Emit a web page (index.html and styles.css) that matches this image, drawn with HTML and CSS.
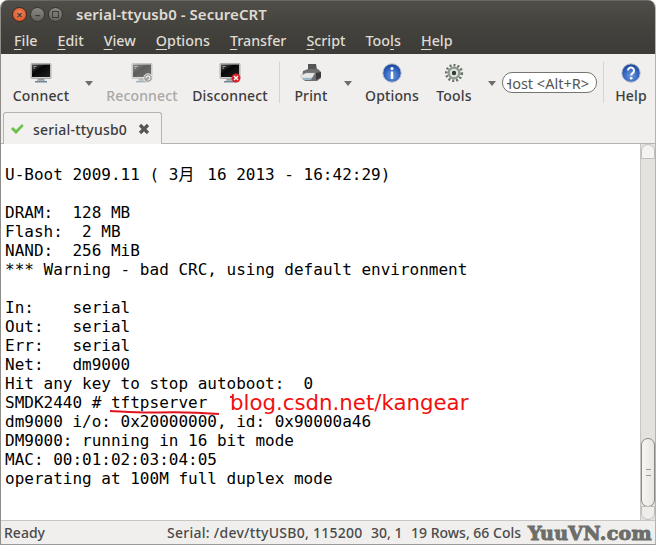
FILE: index.html
```html
<!DOCTYPE html>
<html lang="en">
<head>
<meta charset="utf-8">
<title>serial-ttyusb0 - SecureCRT</title>
<link rel="stylesheet" href="styles.css">
</head>
<body>
<svg class="defs" width="0" height="0">
  <defs>
    <linearGradient id="scr" x1="0" y1="0" x2="1" y2="1"><stop offset="0" stop-color="#555"/><stop offset=".4" stop-color="#050505"/><stop offset="1" stop-color="#222"/></linearGradient>
    <radialGradient id="blue" cx=".5" cy=".65" r=".65"><stop offset="0" stop-color="#6f9be0"/><stop offset=".7" stop-color="#2a5cb8"/><stop offset="1" stop-color="#1b3f8a"/></radialGradient>
    <g id="monitor">
      <rect x="1" y="0.5" width="20" height="15" rx="1" fill="#cfcfcf" stroke="#8a8a8a" stroke-width=".6"/>
      <rect x="2" y="1.5" width="18" height="12.5" fill="url(#scr)"/>
      <path d="M3.5 3.5h3M3.5 5.2h1.5" stroke="#ccc" stroke-width=".7"/>
      <path d="M8 15.5h6l1 2.2H7z" fill="#9a9a9a"/>
      <path d="M5 18h12v1.4H5z" fill="#6f8a96"/>
    </g>
  </defs>
</svg>
<div class="window">
  <header class="titlebar">
    <div class="controls">
      <span class="ctl ctl-close">×</span>
      <span class="ctl ctl-min">–</span>
      <span class="ctl ctl-max"><i></i></span>
    </div>
    <span class="title">serial-ttyusb0 - SecureCRT</span>
  </header>
  <nav class="menubar">
    <span class="menu"><u>F</u>ile</span>
    <span class="menu"><u>E</u>dit</span>
    <span class="menu"><u>V</u>iew</span>
    <span class="menu"><u>O</u>ptions</span>
    <span class="menu"><u>T</u>ransfer</span>
    <span class="menu"><u>S</u>cript</span>
    <span class="menu">Too<u>l</u>s</span>
    <span class="menu"><u>H</u>elp</span>
  </nav>
  <div class="toolbar">
    <div class="tool w-connect">
      <svg class="ico" viewBox="0 0 22 20" width="22" height="20"><use href="#monitor"/></svg>
      <span>Connect</span>
    </div>
    <div class="arrow a-connect"></div>
    <div class="tool w-reconnect off">
      <svg class="ico" viewBox="0 0 22 20" width="22" height="20"><g opacity=".62"><use href="#monitor"/></g><circle cx="17" cy="15" r="4.3" fill="#a5a5a5" stroke="#eee" stroke-width=".8"/><path d="M15 15a2 2 0 1 1 2 2" fill="none" stroke="#fff" stroke-width="1"/></svg>
      <span>Reconnect</span>
    </div>
    <div class="tool w-disconnect">
      <svg class="ico" viewBox="0 0 22 20" width="22" height="20"><use href="#monitor"/><circle cx="17" cy="15" r="4.5" fill="#d91f26"/><path d="M15 13l4 4M19 13l-4 4" stroke="#fff" stroke-width="1.4"/></svg>
      <span>Disconnect</span>
    </div>
    <div class="sep s-one"></div>
    <div class="tool w-print">
      <svg class="ico" viewBox="0 0 22 20" width="22" height="20"><path d="M8 1h8l1 6H8z" fill="#555"/><path d="M3 8l5-2h10l3 3v6l-4 3H5l-3-3z" fill="#6e6e6e"/><path d="M0 13l6-3h9l-3 5H2z" fill="#e8e8e8" stroke="#aaa" stroke-width=".4"/><path d="M2 15h10l-1 2H3z" fill="#9ab7c9"/><path d="M16 10l5-1v5l-5 3z" fill="#3a3a3a"/></svg>
      <span>Print</span>
    </div>
    <div class="arrow a-print"></div>
    <div class="tool w-options">
      <svg class="ico" viewBox="0 0 22 20" width="22" height="20"><circle cx="11" cy="10" r="9.2" fill="url(#blue)" stroke="#b9c0cc" stroke-width="1"/><circle cx="11" cy="5.6" r="1.5" fill="#fff"/><path d="M9.8 8.500h2.400v7.500H9.800z" fill="#fff"/></svg>
      <span>Options</span>
    </div>
    <div class="tool w-tools">
      <svg class="ico" viewBox="0 0 22 20" width="22" height="20"><circle cx="11" cy="10" r="6.500" fill="#8c9a90"/><circle cx="11" cy="10" r="7.800" fill="none" stroke="#66726a" stroke-width="2.600" stroke-dasharray="2 2"/><circle cx="11" cy="10" r="4.200" fill="#e4e4da"/><circle cx="11" cy="10" r="2.200" fill="#2f3a3a"/></svg>
      <span>Tools</span>
    </div>
    <div class="arrow a-tools"></div>
    <div class="search"><div class="search-clip"><span>Host &lt;Alt+R&gt;</span></div></div>
    <div class="sep s-two"></div>
    <div class="tool w-help">
      <svg class="ico" viewBox="0 0 22 20" width="22" height="20"><circle cx="11" cy="10" r="9.2" fill="url(#blue)" stroke="#b9c0cc" stroke-width="1"/><path d="M8 7.500a3 3 0 1 1 4.600 2.600c-1 .7-1.400 1.100-1.400 2.400" fill="none" stroke="#fff" stroke-width="2"/><circle cx="11.200" cy="15.300" r="1.300" fill="#fff"/></svg>
      <span>Help</span>
    </div>
  </div>
  <div class="tabstrip">
    <div class="tab">
      <svg class="check" viewBox="0 0 14 12" width="14" height="12"><path d="M1 6l2-2 3 3 6-6 1.500 2L6 11z" fill="#6cc04a" stroke="#9ad884" stroke-width=".5"/></svg>
      <span class="tab-label">serial-ttyusb0</span>
      <svg class="tab-close" viewBox="0 0 12 12" width="12" height="12"><path d="M2 2l8 8M10 2l-8 8" stroke="#555" stroke-width="3.200"/></svg>
    </div>
  </div>
  <main class="session">
<pre class="terminal">

U-Boot 2009.11 ( 3<span class="cjk">月</span> 16 2013 - 16:42:29)

DRAM:  128 MB
Flash:  2 MB
NAND:  256 MiB
*** Warning - bad CRC, using default environment

In:    serial
Out:   serial
Err:   serial
Net:   dm9000
Hit any key to stop autoboot:  0
SMDK2440 # tftpserver
dm9000 i/o: 0x20000000, id: 0x90000a46
DM9000: running in 16 bit mode
MAC: 00:01:02:03:04:05
operating at 100M full duplex mode</pre>
    <div class="scrollbar">
      <span class="sb-cap"></span>
      <span class="sb-thumb"><i></i></span>
      <span class="sb-down"></span>
    </div>
    <span class="note">blog.csdn.net/kangear</span>
    <span class="tick"></span>
    <svg class="scribble" viewBox="0 0 112 8" width="112" height="8"><path d="M1 2C20 3 30 4 50 3.500S90 3.500 110 5" fill="none" stroke="#e0141c" stroke-width="2"/></svg>
  </main>
  <footer class="statusbar">
    <span class="st-ready">Ready</span>
    <span class="st-serial">Serial: /dev/ttyUSB0, 115200</span>
    <span class="st-pos">30, 1</span>
    <span class="st-size">19 Rows, 66 Cols</span>
    <span class="watermark">YuuVN.com</span>
  </footer>
</div>
</body>
</html>
```
FILE: styles.css
```css
* { box-sizing: border-box; }
html, body { margin: 0; padding: 0; }
body { width: 656px; height: 545px; overflow: hidden; background: #fff; font-family: "Noto Sans", "Open Sans", sans-serif; }
.defs { position: absolute; }
.window { display: flex; flex-direction: column; width: 656px; height: 545px; border-radius: 8px 8px 0 0; overflow: hidden; border-left: 1px solid #8f8d88; border-bottom: 1px solid #9a9892; border-right: 1px solid #b5b3ae; background: #f0efed; position: relative; }

.titlebar { height: 27px; flex: none; display: flex; align-items: center; background: linear-gradient(#504e49, #44423d); border-top: 1px solid #6a6863; padding-left: 11px; }
.controls { display: flex; gap: 3px; width: 64px; }
.ctl { width: 15px; height: 15px; border-radius: 50%; display: flex; align-items: center; justify-content: center; font-size: 11px; line-height: 1; font-weight: 700; color: #3c3b37; }
.ctl-close { background: radial-gradient(circle at 50% 40%, #f0845a, #d8491d); border: 1px solid #3a2a22; }
.ctl-min, .ctl-max { background: linear-gradient(#8a8880, #65635c); border: 1px solid #36352f; }
.ctl-max i { width: 7px; height: 7px; border: 1px solid #3c3b37; }
.title { color: #dfdbd2; font-size: 15px; font-weight: 600; letter-spacing: .05px; }

.menubar { height: 27px; flex: none; display: flex; align-items: center; background: linear-gradient(#44423d, #3c3b37); padding-left: 13px; gap: 20px; color: #dfdbd2; font-size: 14.300px; font-weight: 500; }
.menu u { text-underline-offset: 3px; text-decoration-thickness: 1px; }

.toolbar { height: 58px; flex: none; display: flex; align-items: flex-start; background: #f0efed; position: relative; padding-top: 9px; color: #3c3c3c; font-size: 14px; font-weight: 500; letter-spacing: .15px; }
.tool { display: flex; flex-direction: column; align-items: center; flex: none; gap: 3px; line-height: 20px; white-space: nowrap; }
.ico { display: block; flex: none; }
.off { color: #a8a8a8; }
.w-connect { width: 80px; }
.w-reconnect { width: 88px; margin-left: 5px; }
.w-disconnect { width: 88px; }
.w-print { width: 46px; margin-left: 8px; }
.w-options { width: 62px; margin-left: 3px; }
.w-tools { width: 62px; }
.w-help { width: 54px; }
.arrow { flex: none; width: 0; height: 0; border-left: 4px solid transparent; border-right: 4px solid transparent; border-top: 5px solid #6d6d6d; margin-top: 18px; }
.a-connect { margin-left: 4px; }
.a-print { margin-left: 10px; margin-right: 6px; }
.a-tools { margin-left: 3px; }
.sep { flex: none; width: 1px; height: 41px; background: #d5d3cf; margin-top: -1px; }
.s-one { margin-left: 5px; }
.s-two { margin-left: 6px; }
.search { flex: none; display: flex; align-items: center; width: 95px; height: 21px; margin-left: 6px; margin-top: 9px; padding: 0 7px 0 4px; border: 1px solid #77756f; border-radius: 10px; background: #fff; }
.search-clip { flex: 1; min-width: 0; display: flex; justify-content: flex-end; overflow: hidden; font-size: 14.500px; font-weight: 400; letter-spacing: 0; color: #555; white-space: nowrap; }

.tabstrip { height: 32px; flex: none; background: #f0efed; border-bottom: 1px solid #b5b3ae; padding-left: 2px; }
.tab { width: 159px; height: 32px; display: flex; align-items: center; background: #f2f1f0; border: 1px solid #b5b3ae; border-bottom: none; border-radius: 3px 3px 0 0; padding-left: 6px; color: #3c3c3c; font-size: 14px; font-weight: 500; letter-spacing: .2px; padding-top: 1px; }
.tab-label { margin-left: 9px; }
.tab-close { margin-left: 11px; }

.session { flex: 1; min-height: 0; display: flex; background: #fff; position: relative; border-bottom: 1px solid #c8c6c2; }
.terminal { flex: 1; margin: 0; padding: 2px 0 0 4px; font-family: "DejaVu Sans Mono", monospace; font-size: 16px; line-height: 19px; color: #000; overflow: hidden; }
.cjk { display: inline-block; width: 19.260px; font-family: "Noto Sans CJK SC", sans-serif; line-height: 1; }
.scrollbar { flex: none; width: 15px; display: flex; flex-direction: column; background: #e4e2de; border-left: 1px solid #c8c6c2; position: relative; }
.sb-cap { height: 15px; background: #f4f3f1; border: 1px solid #c0beb9; border-radius: 7px 7px 0 0; }
.sb-thumb { position: absolute; left: 0; top: 294px; width: 14px; height: 69px; background: linear-gradient(90deg, #f6f5f3, #e8e6e3); border: 1px solid #8a8883; border-radius: 7px; display: flex; align-items: center; justify-content: center; }
.sb-thumb i { width: 5px; height: 7px; border-top: 1px solid #9a9893; border-bottom: 1px solid #9a9893; }
.sb-down { position: absolute; left: 0; bottom: 0; width: 14px; height: 14px; background: #eeedeb; border: 1px solid #c0beb9; border-radius: 0 0 7px 7px; }

.note { position: absolute; left: 229px; top: 246px; font-family: "DejaVu Sans", sans-serif; font-size: 21.300px; line-height: 26px; color: #f01010; white-space: nowrap; }
.tick { position: absolute; left: 229px; top: 252px; width: 3px; height: 2px; background: #e0141c; }
.scribble { position: absolute; left: 108px; top: 265px; }

.statusbar { height: 23px; flex: none; display: flex; align-items: center; position: relative; background: #f0efed; color: #4a4a4a; font-size: 14px; font-weight: 500; white-space: nowrap; padding-left: 3px; }
.st-ready { width: 163px; }
.st-serial { width: 204px; letter-spacing: .27px; }
.st-pos { width: 40px; }
.watermark { position: absolute; right: 3px; top: 1px; font-family: "DejaVu Serif", serif; font-weight: 900; font-size: 19px; line-height: 22px; color: #6d6d69; letter-spacing: .3px; -webkit-text-stroke: 1px #6d6d69; }
```
